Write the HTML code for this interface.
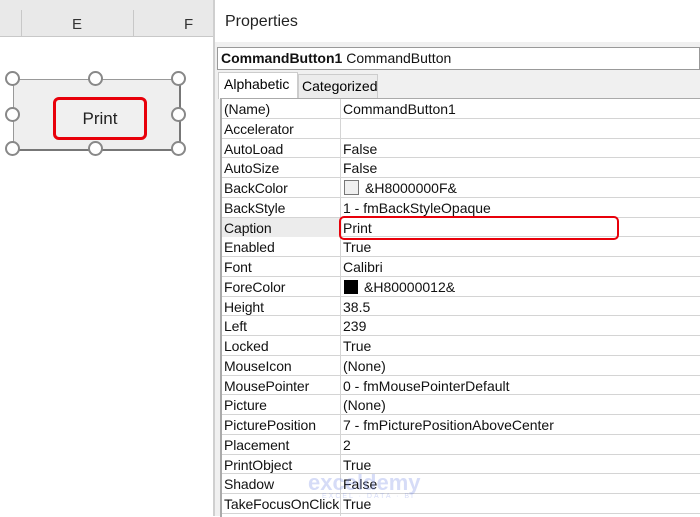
<html><head><style>
body{margin:0;width:700px;height:516px;overflow:hidden;background:#fff;font-family:"Liberation Sans",sans-serif;position:relative}
.a{position:absolute}
.r{position:absolute;left:222px;width:478px;height:19.75px;border-bottom:1px solid #d4d4d4;box-sizing:border-box;font-size:14px;color:#111}
.r span{position:absolute;top:2px;white-space:nowrap}
.n{left:2px;letter-spacing:-0.1px}.v{left:121px}
.h{position:absolute;width:11px;height:11px;border:2px solid #888;border-radius:50%;background:#fff}
</style></head><body>
<div class="a" style="left:0;top:0;width:214px;height:36px;background:#e9e9e9;border-bottom:1px solid #c8c8c8"></div>
<div class="a" style="left:21px;top:10px;width:1px;height:26px;background:#c8c8c8"></div>
<div class="a" style="left:133px;top:10px;width:1px;height:26px;background:#c8c8c8"></div>
<div class="a" style="left:72px;top:16px;font-size:15px;color:#333">E</div>
<div class="a" style="left:184px;top:16px;font-size:15px;color:#333">F</div>
<div class="a" style="left:13px;top:79px;width:165px;height:69px;border:1px solid #999;border-right:2px solid #777;border-bottom:2px solid #777;background:#efefef"></div>
<div class="a" style="left:53px;top:97px;width:88px;height:37px;border:3px solid #e8000a;border-radius:6px;background:#f0f0f0;font-size:17px;text-align:center;line-height:37px;color:#222">Print</div>
<div class="h" style="left:5px;top:71px"></div><div class="h" style="left:88px;top:71px"></div><div class="h" style="left:171px;top:71px"></div>
<div class="h" style="left:5px;top:107px"></div><div class="h" style="left:171px;top:107px"></div>
<div class="h" style="left:5px;top:141px"></div><div class="h" style="left:88px;top:141px"></div><div class="h" style="left:171px;top:141px"></div>
<div class="a" style="left:213px;top:0;width:2px;height:516px;background:#cfcfcf"></div>
<div class="a" style="left:215px;top:0;width:485px;height:516px;background:#f0f0f0"></div>
<div class="a" style="left:215px;top:0;width:485px;height:42px;background:#fff"></div>
<div class="a" style="left:225px;top:13px;font-size:16px;color:#222">Properties</div>
<div class="a" style="left:217px;top:47px;width:483px;height:23px;background:#fff;border:1px solid #999;box-sizing:border-box"></div>
<div class="a" style="left:221px;top:50px;font-size:14px;color:#111"><b>CommandButton1</b> CommandButton</div>
<div class="a" style="left:218px;top:72px;width:80px;height:27px;background:#fff;border:1px solid #ccc;border-bottom:none;box-sizing:border-box"></div>
<div class="a" style="left:224px;top:76px;font-size:14px">Alphabetic</div>
<div class="a" style="left:298px;top:74px;width:80px;height:24px;background:#ececec;border:1px solid #ccc;border-bottom:none;box-sizing:border-box"></div>
<div class="a" style="left:302px;top:78px;font-size:14px">Categorized</div>
<div class="a" style="left:220px;top:98px;width:480px;height:418px;background:#fff;border-left:2px solid #aaa;border-top:1px solid #aaa"></div>
<div class="a" style="left:340px;top:99px;width:1px;height:417px;background:#d4d4d4"></div>
<div class="r" style="top:99px"><span class="n">(Name)</span><span class="v">CommandButton1</span></div>
<div class="r" style="top:118.75px"><span class="n">Accelerator</span></div>
<div class="r" style="top:138.5px"><span class="n">AutoLoad</span><span class="v">False</span></div>
<div class="r" style="top:158.25px"><span class="n">AutoSize</span><span class="v">False</span></div>
<div class="r" style="top:178px"><span class="n">BackColor</span><span class="v" style="left:122px"><i style="display:inline-block;width:13px;height:13px;border:1px solid #777;background:#f0f0f0;vertical-align:-2px;margin-right:6px"></i>&amp;H8000000F&amp;</span></div>
<div class="r" style="top:197.75px"><span class="n">BackStyle</span><span class="v">1 - fmBackStyleOpaque</span></div>
<div class="r" style="top:217.5px"><span class="n" style="left:0;top:0;width:118px;background:#ececec;padding-left:2px;padding-top:2px;height:17px">Caption</span><span class="v">Print</span></div>
<div class="r" style="top:237.25px"><span class="n">Enabled</span><span class="v">True</span></div>
<div class="r" style="top:257px"><span class="n">Font</span><span class="v">Calibri</span></div>
<div class="r" style="top:276.75px"><span class="n">ForeColor</span><span class="v" style="left:122px"><i style="display:inline-block;width:14px;height:14px;background:#000;vertical-align:-2px;margin-right:6px"></i>&amp;H80000012&amp;</span></div>
<div class="r" style="top:296.5px"><span class="n">Height</span><span class="v">38.5</span></div>
<div class="r" style="top:316.25px"><span class="n">Left</span><span class="v">239</span></div>
<div class="r" style="top:336px"><span class="n">Locked</span><span class="v">True</span></div>
<div class="r" style="top:355.75px"><span class="n">MouseIcon</span><span class="v">(None)</span></div>
<div class="r" style="top:375.5px"><span class="n">MousePointer</span><span class="v">0 - fmMousePointerDefault</span></div>
<div class="r" style="top:395.25px"><span class="n">Picture</span><span class="v">(None)</span></div>
<div class="r" style="top:415px"><span class="n">PicturePosition</span><span class="v">7 - fmPicturePositionAboveCenter</span></div>
<div class="r" style="top:434.75px"><span class="n">Placement</span><span class="v">2</span></div>
<div class="r" style="top:454.5px"><span class="n">PrintObject</span><span class="v">True</span></div>
<div class="r" style="top:474.25px"><span class="n">Shadow</span><span class="v">False</span></div>
<div class="r" style="top:494px"><span class="n">TakeFocusOnClick</span><span class="v">True</span></div>
<div class="a" style="left:339px;top:216px;width:276px;height:20px;border:2.5px solid #e8000a;border-radius:5px"></div>
<div class="a" style="left:308px;top:470px;font-size:22px;font-weight:bold;color:rgba(120,140,230,.3)">exceldemy</div>
<div class="a" style="left:322px;top:493px;font-size:7px;letter-spacing:2px;color:rgba(120,140,230,.3)">EXCEL · DATA · BI</div>
</body></html>
